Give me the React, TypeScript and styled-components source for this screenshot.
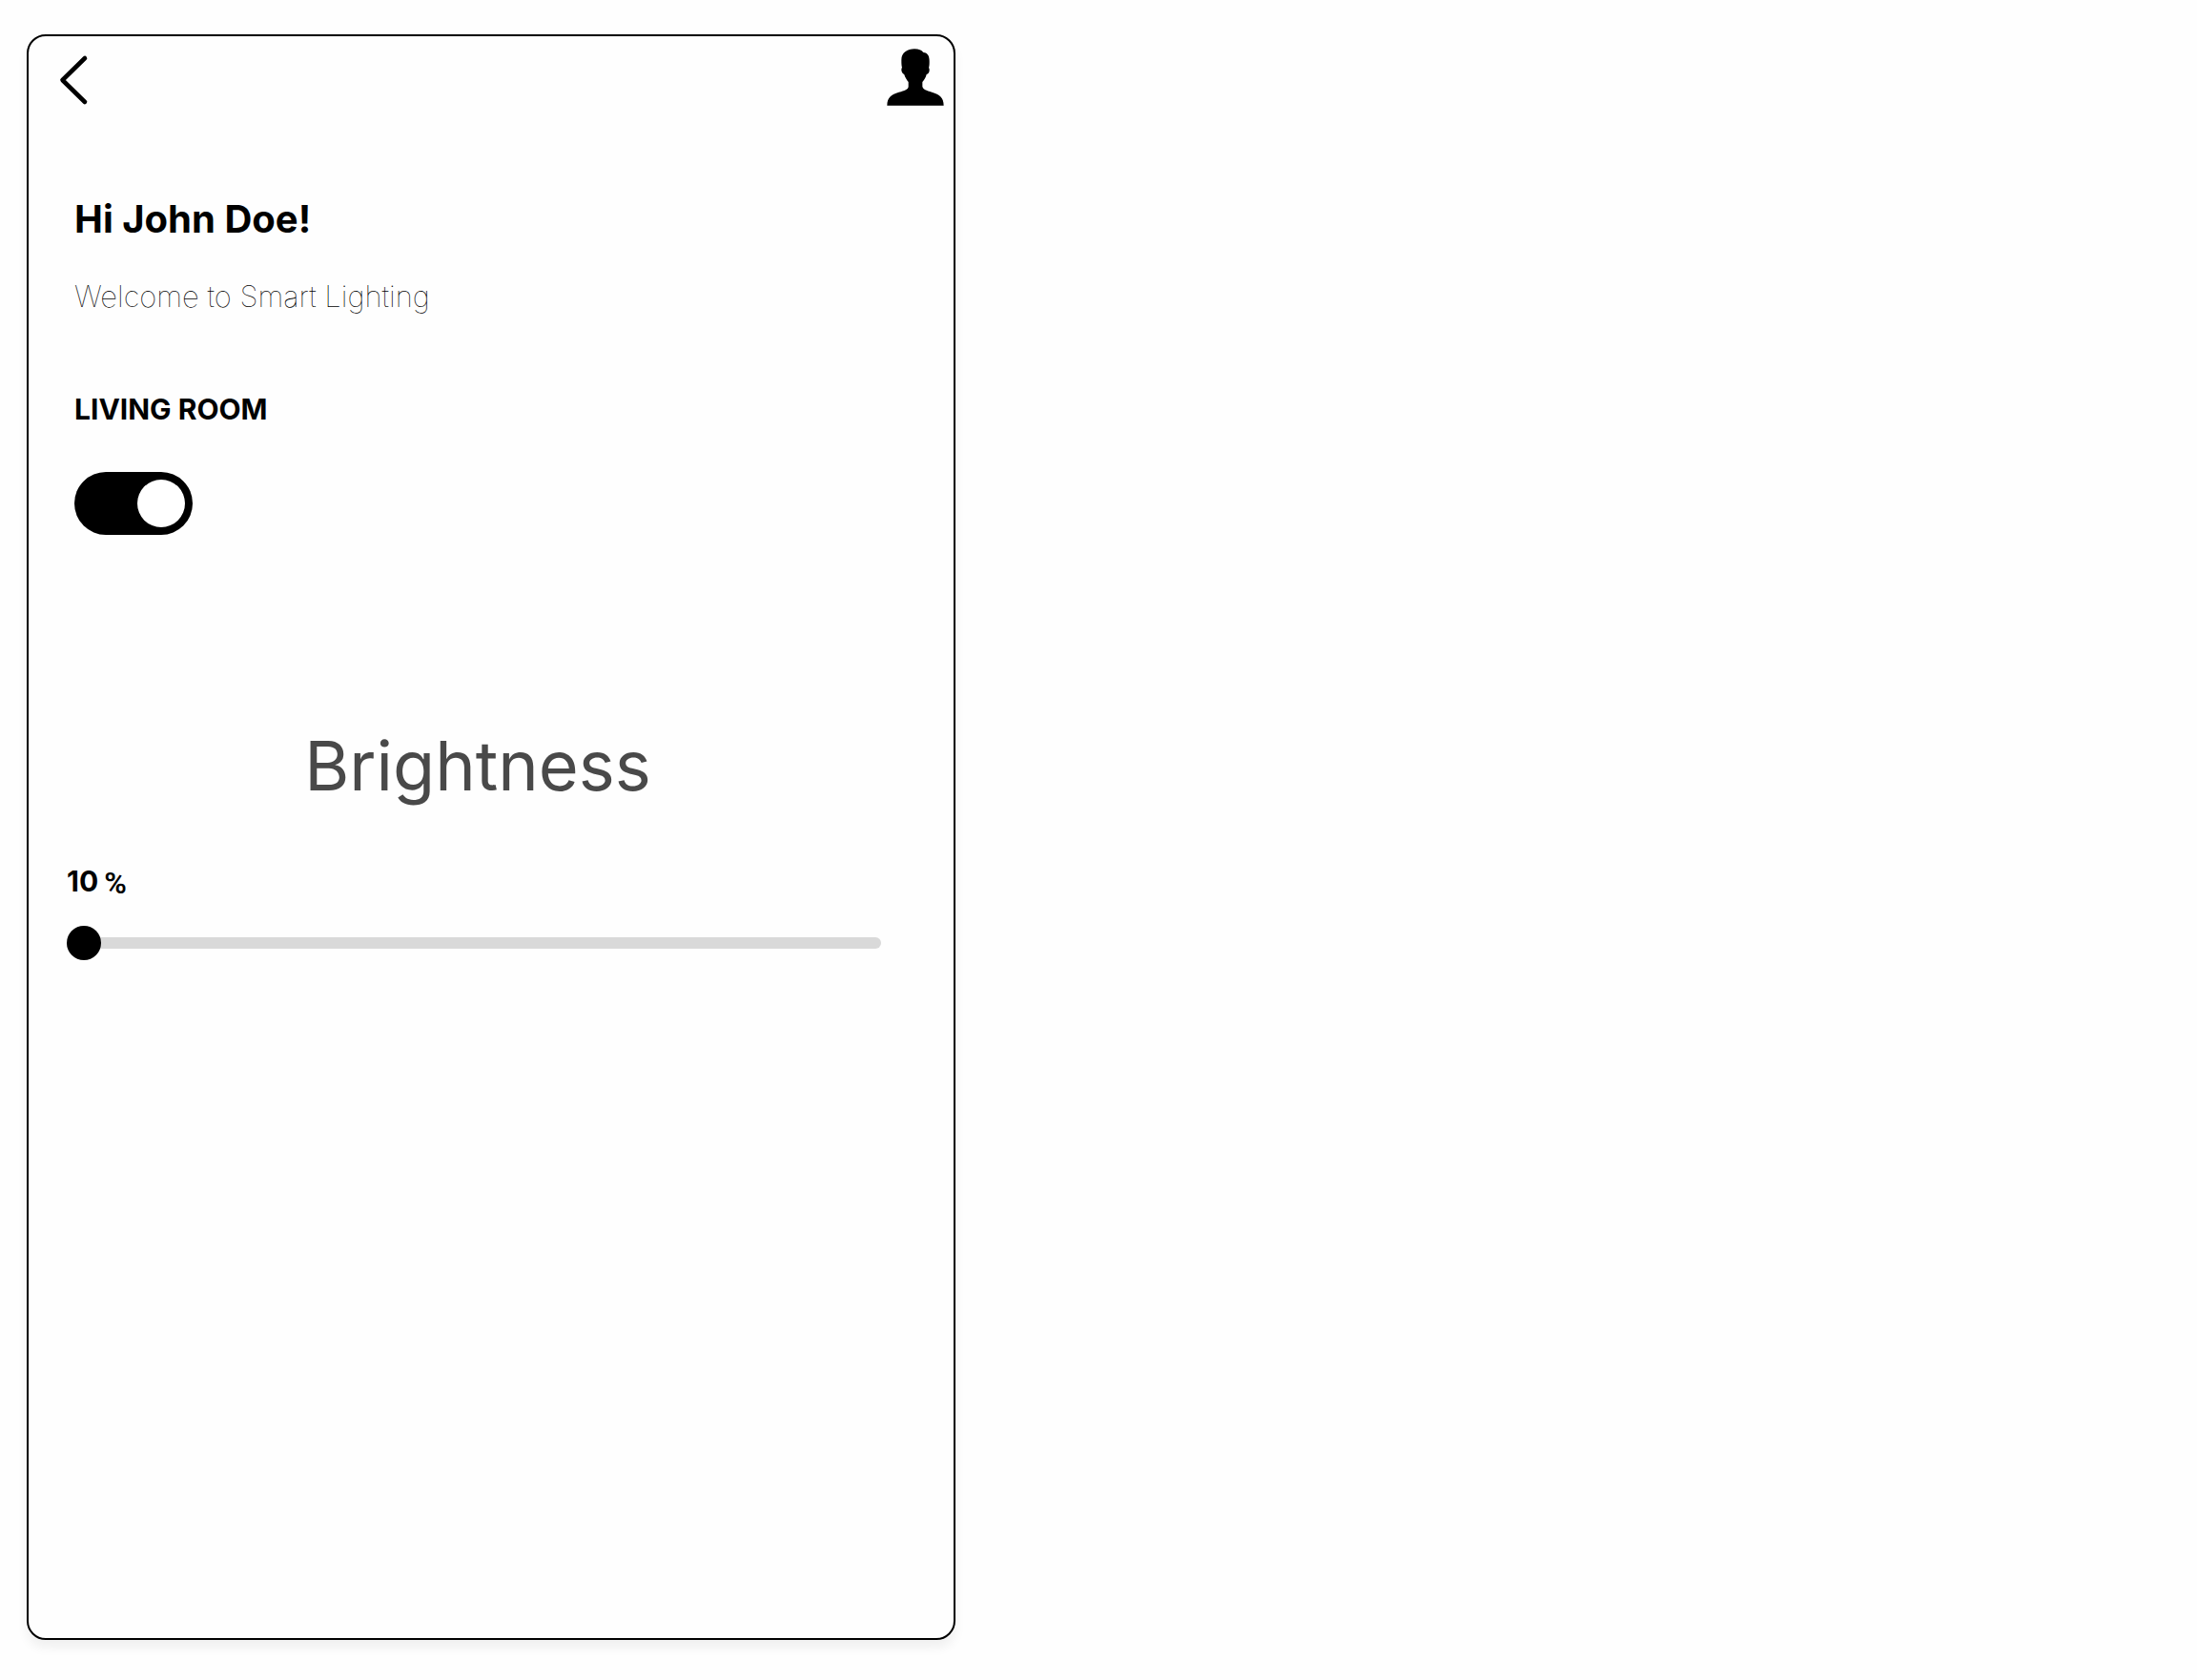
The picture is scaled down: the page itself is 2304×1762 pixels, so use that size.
import React, { useState } from "react";
import styled, { createGlobalStyle } from "styled-components";

const GlobalStyle = createGlobalStyle`
  *, *::before, *::after { box-sizing: border-box; }
  body {
    margin: 0;
    background: #fefefe;
    color: #000;
    font-family: Inter, "Liberation Sans", sans-serif;
  }
`;

const Page = styled.div`
  min-height: 100vh;
  padding: 36px 28px 42px;
  display: flex;
`;

const Card = styled.main`
  flex: 0 1 974px;
  display: flex;
  flex-direction: column;
  border: 2px solid #000;
  border-radius: 20px;
  background: #fefefe;
  box-shadow: 0 8px 12px rgba(0, 0, 0, 0.06);
`;

const TopBar = styled.header`
  display: flex;
  justify-content: space-between;
  align-items: flex-start;
  padding: 13px 10px 0 32px;
`;

const IconButton = styled.button`
  display: flex;
  padding: 0;
  border: 0;
  background: none;
  color: inherit;
  cursor: pointer;
`;

const Greeting = styled.section`
  display: flex;
  flex-direction: column;
  gap: 38px;
  padding: 95px 48px 0;
`;

const Title = styled.h1`
  margin: 0;
  font-size: 40px;
  line-height: 48px;
  font-weight: 700;
`;

const Subtitle = styled.p`
  margin: 0;
  font-size: 31px;
  line-height: 38px;
  font-weight: 100;
`;

const Room = styled.section`
  display: flex;
  flex-direction: column;
  align-items: flex-start;
  gap: 48px;
  padding: 81px 48px 0;
`;

const RoomName = styled.label`
  font-size: 30px;
  line-height: 36px;
  font-weight: 700;
`;

const Switch = styled.input`
  appearance: none;
  display: flex;
  width: 124px;
  height: 66px;
  margin: 0;
  padding: 8px;
  border-radius: 33px;
  background: #8c8c8c;
  cursor: pointer;

  &::before {
    content: "";
    width: 50px;
    height: 50px;
    border-radius: 50%;
    background: #fff;
  }

  &:checked {
    justify-content: flex-end;
    background: #000;
  }
`;

const Brightness = styled.section`
  display: flex;
  flex-direction: column;
  padding: 198px 76px 0 40px;
`;

const BrightnessLabel = styled.label`
  align-self: center;
  padding-left: 8px;
  font-size: 72px;
  line-height: 88px;
  color: #494949;
`;

const Level = styled.output`
  display: flex;
  align-items: flex-end;
  gap: 6px;
  margin-top: 59px;
  font-size: 30px;
  line-height: 36px;
  font-weight: 700;
`;

const Unit = styled.span`
  font-family: Roboto, "Liberation Sans", sans-serif;
  font-size: 32px;
  line-height: 32px;
  font-weight: 600;
`;

const Slider = styled.input`
  appearance: none;
  width: 100%;
  height: 36px;
  margin: 29px 0 0;
  background: none;
  cursor: pointer;

  &::-webkit-slider-runnable-track {
    height: 12px;
    border-radius: 6px;
    background: #d9d9d9;
  }

  &::-webkit-slider-thumb {
    appearance: none;
    width: 36px;
    height: 36px;
    margin-top: -12px;
    border-radius: 50%;
    background: #000;
  }
`;

const BackIcon = () => (
  <svg width="32" height="60" viewBox="0 0 32 60" fill="none" aria-hidden="true">
    <path
      d="M27 10 L3.5 33 L27 56"
      stroke="currentColor"
      strokeWidth="4.6"
      strokeLinecap="round"
      strokeLinejoin="round"
    />
  </svg>
);

const UserIcon = () => (
  <svg width="60" height="60" viewBox="0 0 180 180" fill="currentColor" aria-hidden="true">
    <path d="M1 179 C1 153 14 144 38 137 C56 132 68 128 68 119 L68 105 C62 98 58 91 55 82 C50 79 46 73 46 67 C46 63 47 61 48 60 C46 52 46 44 46 35 C46 13 64 1 87 1 C101 1 109 5 115 12 C129 13 134 24 134 40 C134 48 134 54 132 61 C134 62 134 65 134 68 C134 74 130 79 125 81 C123 91 118 98 112 105 L112 119 C114 128 124 131 142 137 C166 144 179 153 179 179 Z" />
  </svg>
);

export default function App() {
  const [on, setOn] = useState(true);
  const [level, setLevel] = useState(10);

  return (
    <>
      <GlobalStyle />
      <Page>
        <Card>
          <TopBar>
            <IconButton type="button" aria-label="Back">
              <BackIcon />
            </IconButton>
            <IconButton type="button" aria-label="Profile">
              <UserIcon />
            </IconButton>
          </TopBar>
          <Greeting>
            <Title>Hi John Doe!</Title>
            <Subtitle>Welcome to Smart Lighting</Subtitle>
          </Greeting>
          <Room>
            <RoomName htmlFor="living-room">LIVING ROOM</RoomName>
            <Switch
              id="living-room"
              type="checkbox"
              role="switch"
              checked={on}
              onChange={(e) => setOn(e.target.checked)}
            />
          </Room>
          <Brightness>
            <BrightnessLabel htmlFor="brightness">Brightness</BrightnessLabel>
            <Level htmlFor="brightness">
              {level}
              <Unit>%</Unit>
            </Level>
            <Slider
              id="brightness"
              type="range"
              min={10}
              max={100}
              value={level}
              onChange={(e) => setLevel(Number(e.target.value))}
            />
          </Brightness>
        </Card>
      </Page>
    </>
  );
}
